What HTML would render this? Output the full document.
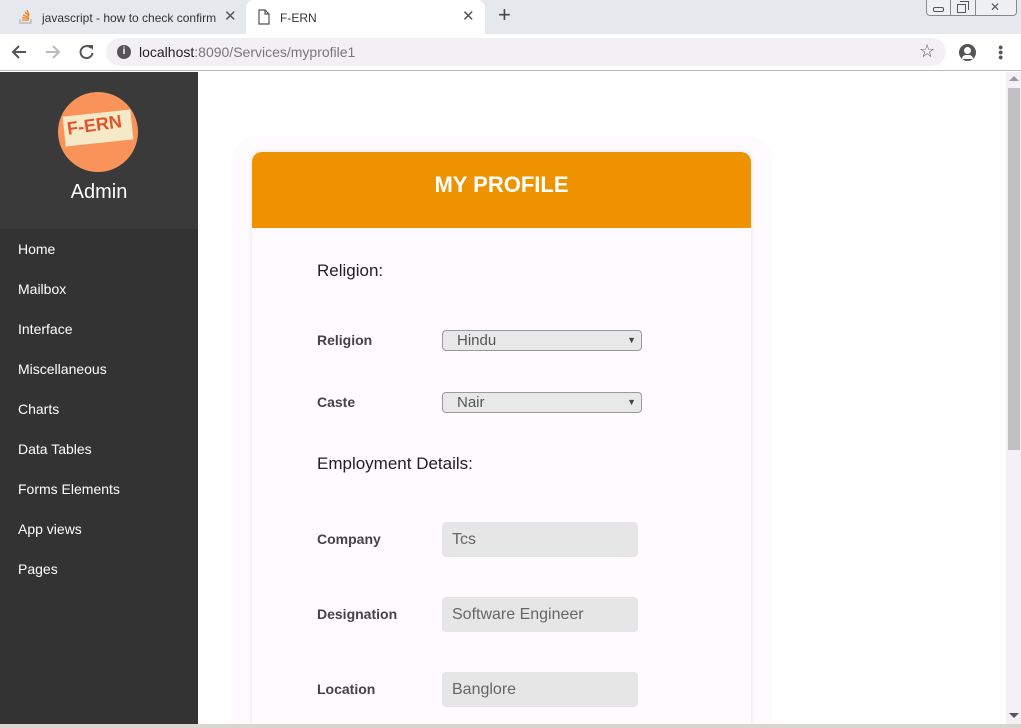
<!DOCTYPE html>
<html><head><style>
*{margin:0;padding:0;box-sizing:border-box}
html,body{width:1021px;height:728px;overflow:hidden}
body{background:#fff;font-family:"Liberation Sans",sans-serif;position:relative}
.abs{position:absolute}
</style></head><body>
<div class="abs" style="left:0;top:0;width:1021px;height:34px;background:#e5e8ec"></div>
<div class="abs" style="left:18px;top:9px;width:16px;height:16px">
<svg width="16" height="16"><path d="M2 10v4h11v-4" stroke="#bbb" fill="none" stroke-width="1.5"/><path d="M4 11h7M4 8.5l7 1M5 6l6 2.5M7 3l4 4M9 1l2 5" stroke="#f48024" stroke-width="1.3"/></svg></div>
<div class="abs" style="left:42px;top:11px;font-size:12px;color:#333;width:178px;white-space:nowrap;overflow:hidden">javascript - how to check confirm pa</div>
<div class="abs" style="left:224px;top:7px;font-size:15px;color:#555">✕</div>
<div class="abs" style="left:246px;top:0;width:239px;height:34px;background:#fff;border-radius:8px 8px 0 0"></div>
<svg class="abs" style="left:258px;top:9px" width="12" height="16"><path d="M1 1h6l4 4v10H1z M7 1v4h4" fill="none" stroke="#555" stroke-width="1.2"/></svg>
<div class="abs" style="left:280px;top:11px;font-size:12px;color:#333">F-ERN</div>
<div class="abs" style="left:462px;top:7px;font-size:15px;color:#555">✕</div>
<div class="abs" style="left:498px;top:2px;font-size:22px;color:#444">+</div>
<div class="abs" style="left:926px;top:0;width:91px;height:16px;border:1px solid #888;border-top:none;border-radius:0 0 4px 4px;background:#eef0f3"></div>
<div class="abs" style="left:950px;top:0;width:1px;height:16px;background:#888"></div>
<div class="abs" style="left:975px;top:0;width:1px;height:16px;background:#888"></div>
<div class="abs" style="left:933px;top:7px;width:11px;height:5px;border:1px solid #555;border-radius:2px"></div>
<div class="abs" style="left:957px;top:4px;width:9px;height:9px;border:1px solid #555"></div>
<div class="abs" style="left:960px;top:1px;width:9px;height:9px;border:1px solid #555;border-left:none;border-bottom:none"></div>
<div class="abs" style="left:990px;top:0;font-size:12px;color:#555">✕</div>
<div class="abs" style="left:0;top:34px;width:1021px;height:37px;background:#fff;border-bottom:1px solid #bbb"></div>
<svg class="abs" style="left:10px;top:43px" width="90" height="18"><path d="M16 9H3M9 3L3 9l6 6" stroke="#555" stroke-width="2" fill="none"/><path d="M36 9h13M43 3l6 6-6 6" stroke="#bbb" stroke-width="2" fill="none"/><path d="M81 5a6 6 0 1 0 1.5 5" stroke="#555" stroke-width="2" fill="none"/><path d="M78 2h5v5z" fill="#555"/></svg>
<div class="abs" style="left:106px;top:38px;width:840px;height:28px;background:#f3f0f4;border-radius:14px"></div>
<div class="abs" style="left:117px;top:45px;width:14px;height:14px;border-radius:50%;background:#555;color:#fff;font-size:10px;font-weight:bold;text-align:center;line-height:14px">i</div>
<div class="abs" style="left:139px;top:44px;font-size:14px;color:#222">localhost<span style="color:#777">:8090/Services/myprofile1</span></div>
<div class="abs" style="left:919px;top:41px;font-size:18px;color:#555">☆</div>
<div class="abs" style="left:959px;top:44px;width:17px;height:17px;border-radius:50%;background:#555"></div>
<div class="abs" style="left:964px;top:47px;width:7px;height:7px;border-radius:50%;background:#fff"></div>
<div class="abs" style="left:962px;top:55px;width:11px;height:4px;border-radius:4px 4px 0 0;background:#fff"></div>
<div class="abs" style="left:998px;top:45px;width:4px;line-height:5px;font-size:9px;color:#555">●<br>●<br>●</div>
<div class="abs" style="left:0;top:72px;width:198px;height:656px;background:#333"></div>
<div class="abs" style="left:0;top:72px;width:198px;height:157px;background:#3a3a3a"></div>
<div class="abs" style="left:58px;top:92px;width:80px;height:80px;border-radius:50%;background:#f9935a"></div>
<div class="abs" style="left:64px;top:113px;width:68px;height:30px;background:#f5e9c8;transform:rotate(-6deg)"></div>
<div class="abs" style="left:67px;top:115px;font-size:18px;font-weight:bold;color:#e0552b;transform:rotate(-8deg)">F-ERN</div>
<div class="abs" style="left:0;top:181px;width:198px;text-align:center;font-size:20px;color:#fff">Admin</div>
<div class="abs" style="left:18px;top:229px;font-size:14px;color:#fff;line-height:40px">Home<br>Mailbox<br>Interface<br>Miscellaneous<br>Charts<br>Data Tables<br>Forms Elements<br>App views<br>Pages</div>
<div class="abs" style="left:1006px;top:72px;width:15px;height:652px;background:#f4f1f4"></div>
<div class="abs" style="left:1008px;top:88px;width:12px;height:362px;background:#c1c1c1"></div>
<div class="abs" style="left:1009px;top:76px;width:0;border:5px solid transparent;border-bottom-color:#999;border-top:none"></div>
<div class="abs" style="left:1009px;top:713px;width:0;border:5px solid transparent;border-top-color:#555;border-bottom:none"></div>
<div class="abs" style="left:232px;top:136px;width:540px;height:588px;background:#fefbfe;border-radius:24px 24px 0 0"></div>
<div class="abs" style="left:252px;top:152px;width:499px;height:572px;background:#fefafe;border-radius:10px 10px 0 0;box-shadow:0 0 6px rgba(0,0,0,0.1)"></div>
<div class="abs" style="left:252px;top:152px;width:499px;height:76px;background:#ee9200;border-radius:10px 10px 0 0;color:#fff;font-size:22px;font-weight:bold;text-align:center;line-height:66px">MY PROFILE</div>
<div class="abs" style="left:317px;top:261px;font-size:17px;color:#222">Religion:</div>
<div class="abs" style="left:317px;top:454px;font-size:17px;color:#222">Employment Details:</div>
<div class="abs" style="left:317px;top:332px;font-size:14px;font-weight:bold;color:#444">Religion</div>
<div class="abs" style="left:317px;top:394px;font-size:14px;font-weight:bold;color:#444">Caste</div>
<div class="abs" style="left:317px;top:531px;font-size:14px;font-weight:bold;color:#444">Company</div>
<div class="abs" style="left:317px;top:606px;font-size:14px;font-weight:bold;color:#444">Designation</div>
<div class="abs" style="left:317px;top:681px;font-size:14px;font-weight:bold;color:#444">Location</div>
<div class="abs" style="left:442px;top:330px;width:200px;height:21px;background:#e8e8e8;border:1px solid #999;border-radius:4px;font-size:15px;color:#555;padding-left:14px;line-height:19px">Hindu<span style="position:absolute;right:5px;font-size:9px;color:#444">▼</span></div>
<div class="abs" style="left:442px;top:392px;width:200px;height:21px;background:#e8e8e8;border:1px solid #999;border-radius:4px;font-size:15px;color:#555;padding-left:14px;line-height:19px">Nair<span style="position:absolute;right:5px;font-size:9px;color:#444">▼</span></div>
<div class="abs" style="left:442px;top:522px;width:196px;height:35px;background:#e6e6e6;border-radius:4px;font-size:16px;color:#666;padding-left:10px;line-height:35px">Tcs</div>
<div class="abs" style="left:442px;top:597px;width:196px;height:35px;background:#e6e6e6;border-radius:4px;font-size:16px;color:#666;padding-left:10px;line-height:35px">Software Engineer</div>
<div class="abs" style="left:442px;top:672px;width:196px;height:35px;background:#e6e6e6;border-radius:4px;font-size:16px;color:#666;padding-left:10px;line-height:35px">Banglore</div>
<div class="abs" style="left:0;top:724px;width:1021px;height:4px;background:#d8d6d0"></div>
</body></html>
